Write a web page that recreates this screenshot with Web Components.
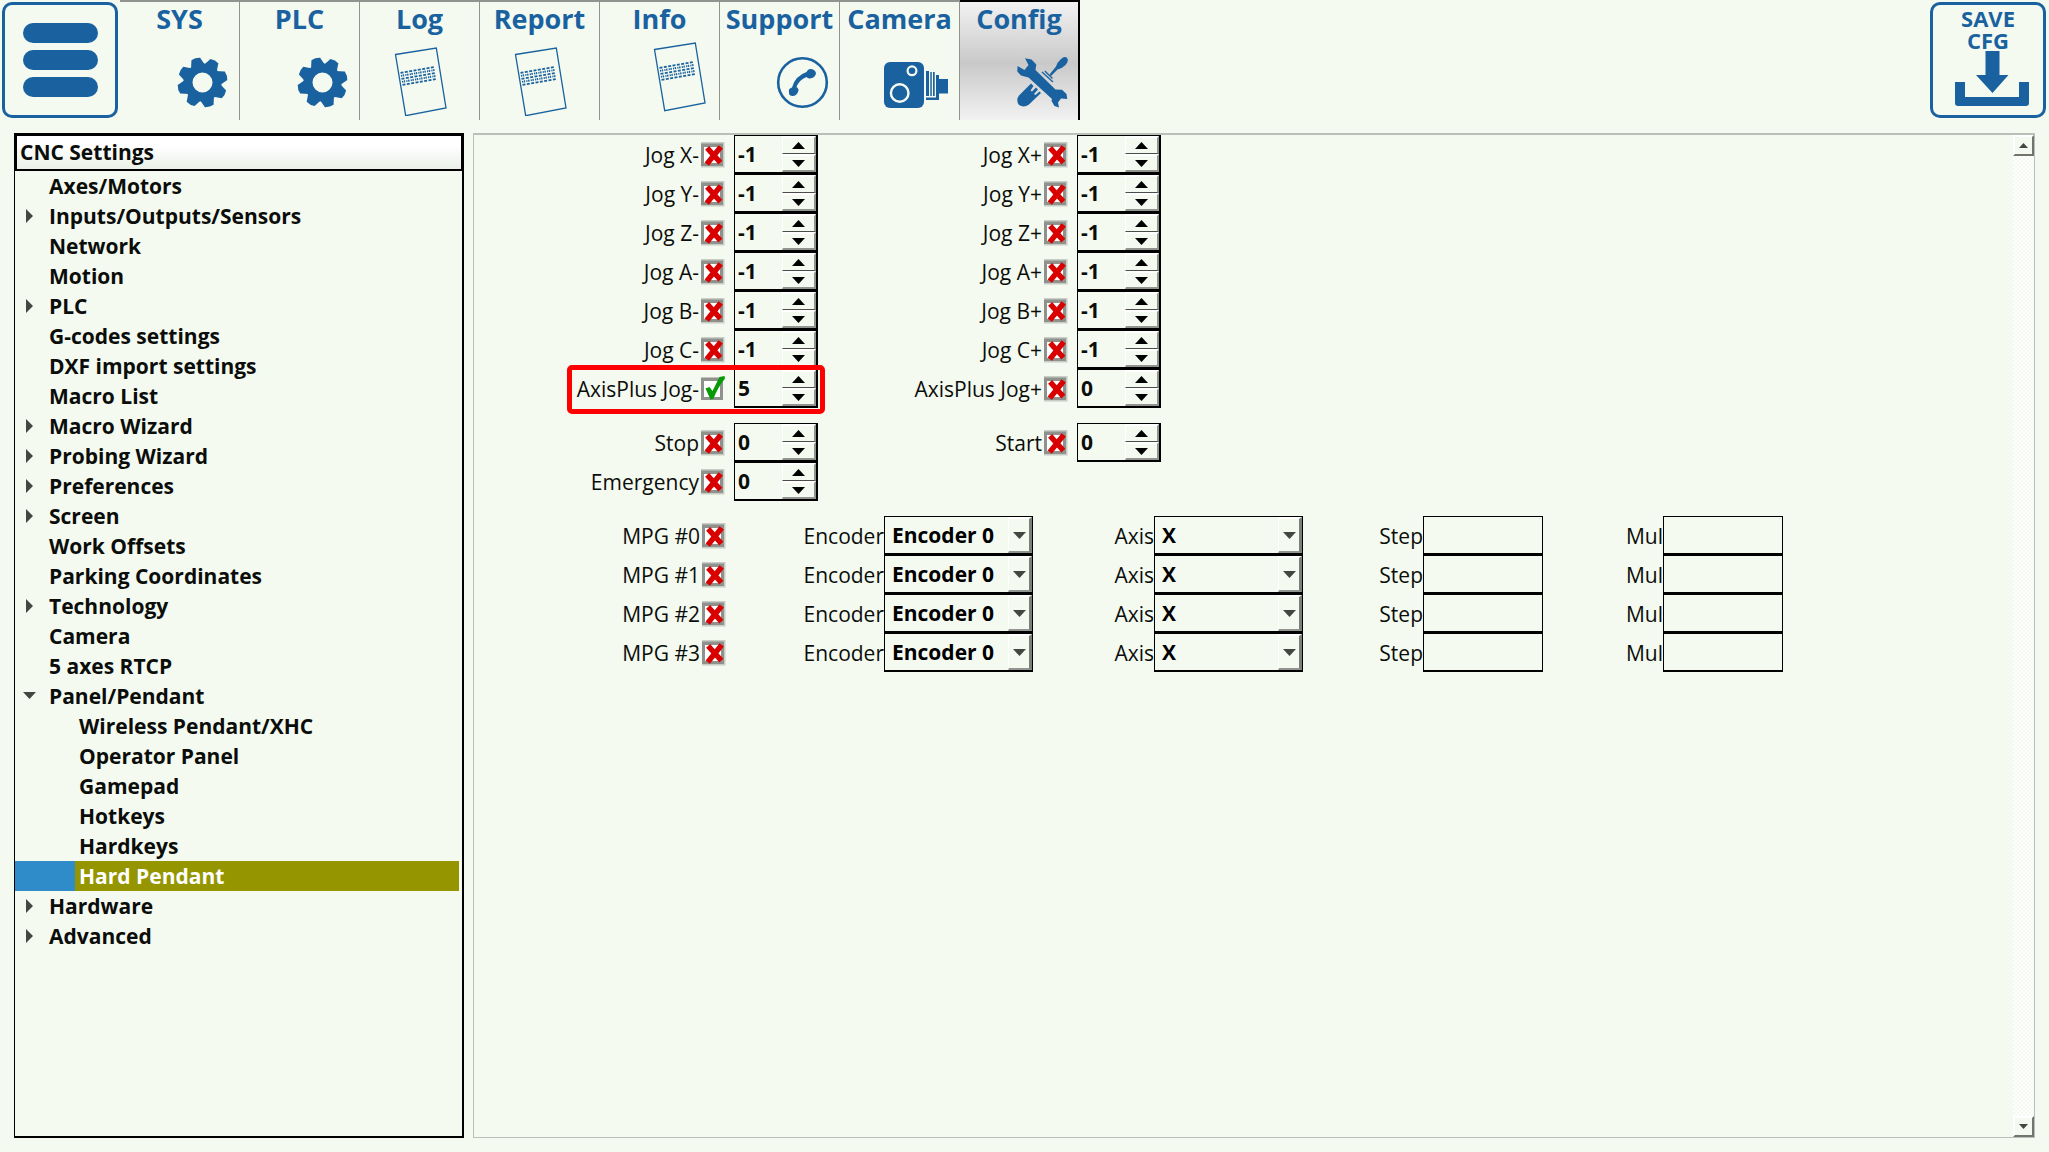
<!DOCTYPE html>
<html lang="en">
<head>
<meta charset="utf-8">
<title>CNC Settings</title>
<style>
  html, body { margin: 0; }
  body {
    --bg: #f4faf0;
    --blue: #1a629f;
    background: var(--bg);
    color: #0b0d0a;
    font: 21px/30px "Open Sans", "Noto Sans", sans-serif;
  }
</style>
</head>
<body>
<cnc-app></cnc-app>

<script>
const define = (name, html, setup) => {
  const template = document.createElement('template');
  template.innerHTML = '<style>*{box-sizing:border-box}</style>' + html;
  customElements.define(name, class extends HTMLElement {
    constructor() {
      super();
      this.attachShadow({ mode: 'open' }).append(template.content.cloneNode(true));
    }
    connectedCallback() {
      if (setup && !this.ready) { this.ready = true; setup(this, this.shadowRoot); }
    }
  });
};

/* Toolbar pictures; coordinates are those of the 119 x 120 tab. */
const gear = '<g fill="currentColor">' +
  [-16, 29, 74, 119, 164, 209, 254, 299].map(a =>
    `<path transform="rotate(${a} 82.5 82.5)" d="M75 67 L78 58 Q82.5 56.5 87 58 L90 67Z"/>`).join('') +
  '</g><circle cx="82.5" cy="82.5" r="14.5" fill="none" stroke="currentColor" stroke-width="9"/>';
const sheet = (dx, dy) => `<g transform="translate(${dx} ${dy})" fill="none" stroke="currentColor">
  <path stroke-width="1.3" d="M35.5 54.5 L76.3 48 L86 108 L45.7 115.7Z"/>
  <g stroke-width="1.8">${[0, 1, 2, 3, 4].map(i =>
    `<path stroke-dasharray="${i % 2 ? '1.2 .6 1.4 1.2' : '3 1.4'}" transform="translate(${i * 0.5} ${i * 3})" d="M40.500 72.800 L74 67"/>`).join('')}
  </g></g>`;
const icons = {
  gear,
  sheet: sheet(0, 0),
  sheetInfo: sheet(19, -5),
  phone: `<circle cx="82.5" cy="82.5" r="24.3" fill="none" stroke="currentColor" stroke-width="2.6"/>
    <path fill="currentColor" d="M69 92 Q68 88.5 72 87.5 Q75 76 86.5 72 Q88 68.5 91 69 Q95.500 69.500 96 73.500 Q95 77.500 91 78.200 Q88 79 86.500 77 Q79 80 76.500 87 Q79.500 89 78 92 Q76 96.500 72 96 Q68.500 95.500 69 92Z"/>`,
  camera: `<g fill="currentColor"><rect x="44" y="62" width="40" height="46" rx="6"/>
    <path d="M86 71h3v25h-3z M90.300 72h1.500v24h-1.500z M93 72h1.700v24h-1.700z M96 75h3v4h9v14.500h-9v6.500h-13v-2.500h10z"/></g>
    <circle cx="72" cy="70.800" r="4.400" fill="none" stroke="#f4faf0" stroke-width="2.200"/>
    <circle cx="59.700" cy="93" r="8.800" fill="none" stroke="#f4faf0" stroke-width="2.400"/>`,
  tools: `<g fill="currentColor">
    <path d="M89.500 74.500 L96 66.500 Q97 62.500 101 59 Q105 55.500 107.300 58.300 Q109 61 105.500 65 Q101.500 69 97.500 69.500 L91 76Z"/>
    <path d="M71 83.500 L73.500 86 L70.500 90.500 L72 91.500 L76 87.500 L78 89.500 L74 94 L75.500 95 L79.500 91.500 L81 93 L69 104.500 Q64 108 59 105 Q55.500 100 59 95.500Z"/>
    <path d="M57.500 66 L57.300 71.500 L61 75.500 L68.500 77.500 L92 99 L91.500 101 L94.500 106 L99 107.500 L98 102.500 L101 98.500 L107.300 99 L106.500 94 L102 89.800 L95.500 89.500 L75.500 70 L76.300 64.500 L71.500 59.600 L65 58.300 L68.500 65 L64.500 70Z"/></g>
    <path fill="none" stroke="currentColor" stroke-width="1.300" d="M82 72 L93 82 M84.800 71 L92.500 78.500"/>`
};

const triangle = { up: 'M0 7 L6.500 0 L13 7Z', down: 'M0 0 L13 0 L6.500 7Z' };

define('cnc-tab', `
  <style>
    :host { display: block; width: 120px; }
    button { display: flex; flex-direction: column; justify-content: flex-start; width: 100%; height: 120px;
      margin: 0; padding: 0; border: 0;
      border-top: 2px solid #91938e; border-right: 1px solid #91938e; background: none;
      color: var(--blue); font: bold 27px/34px "Open Sans", sans-serif; text-align: center; white-space: nowrap; }
    span { display: block; width: 100%; }
    svg { display: block; width: 119px; height: 80px; }
    :host([active]) button { border-color: #000; border-right-width: 2px;
      background: linear-gradient(#f2f2f2, #c9c9c9 52%, #f2f2f2); }
  </style>
  <button type="button"><span><slot></slot></span><svg viewBox="0 36 119 80" aria-hidden="true"></svg></button>`,
  (host, root) => { root.querySelector('svg').innerHTML = icons[host.getAttribute('icon')]; });

define('cnc-framed-button', `
  <style>
    :host { display: block; width: 116px; }
    button { display: flex; flex-direction: column; align-items: center; justify-content: flex-start;
      width: 100%; height: 116px; margin: 0; padding: 0; border: 3px solid var(--blue);
      border-radius: 10px; background: none; color: var(--blue); text-align: center;
      font: bold 22px/22px "Open Sans", sans-serif; }
    ::slotted(svg) { display: block; }
  </style>
  <button type="button"><slot></slot></button>`,
  (host, root) => {
    const label = host.getAttribute('label');
    if (label) root.querySelector('button').setAttribute('aria-label', label);
  });

define('cnc-toolbar', `
  <style>
    :host { display: flex; align-items: flex-start; justify-content: space-between; height: 120px; padding: 0 3px 0 2px; }
    nav { display: flex; gap: 2px; align-items: flex-start; }
    .tabs { display: flex; }
    cnc-framed-button { margin-top: 2px; }
    .bars { width: 110px; height: 110px; }
    .save { width: 110px; height: 60px; }
    .caption { display: block; width: 64px; padding-top: 2px; }
  </style>
  <nav>
    <cnc-framed-button label="Menu"><svg class="bars" viewBox="5 5 110 110" fill="#1a629f" aria-hidden="true">
      <rect x="23" y="23" width="75" height="20" rx="10"/>
      <rect x="23" y="50" width="75" height="20" rx="10"/>
      <rect x="23" y="77" width="75" height="20" rx="10"/></svg></cnc-framed-button>
    <div class="tabs">
      <cnc-tab icon="gear">SYS</cnc-tab>
      <cnc-tab icon="gear">PLC</cnc-tab>
      <cnc-tab icon="sheet">Log</cnc-tab>
      <cnc-tab icon="sheet">Report</cnc-tab>
      <cnc-tab icon="sheetInfo">Info</cnc-tab>
      <cnc-tab icon="phone">Support</cnc-tab>
      <cnc-tab icon="camera">Camera</cnc-tab>
      <cnc-tab icon="tools" active>Config</cnc-tab>
    </div>
  </nav>
  <cnc-framed-button><span class="caption">SAVE CFG</span><svg class="save" viewBox="3 51 110 60" fill="#1a629f" aria-hidden="true">
    <path d="M55.500 51h14v24h9L62.500 93 46 75h9.500z"/>
    <path d="M25 82h10v15h54v-15h10v21q0 3-3 3h-68q-3 0-3-3z"/></svg></cnc-framed-button>`);

define('cnc-tree-item', `
  <style>
    :host { display: block; padding-right: 3px; }
    a { display: flex; height: 30px; color: inherit; text-decoration: none; }
    .mark { display: flex; flex: none; align-items: center; width: 30px; padding-left: 8px; }
    :host([level="2"]) .mark { width: 60px; }
    .text { flex: 1; padding-left: 4px; }
    svg { display: none; width: 14px; height: 14px; fill: #444641; }
    :host([branch]) svg { display: block; }
    :host([selected]) .mark { background: #2f8cc9; }
    :host([selected]) .text { background: #959500; color: #fff; }
  </style>
  <a href="#"><span class="mark"><svg viewBox="0 0 14 14" aria-hidden="true"><path/></svg></span><span class="text"><slot></slot></span></a>`,
  (host, root) => {
    root.querySelector('path').setAttribute('d',
      host.getAttribute('branch') === 'open' ? 'M0 3 H13 L6.500 10Z' : 'M3 0 V14 L10 7Z');
  });

define('cnc-tree', `
  <style>
    :host { display: flex; flex-direction: column; flex: none; width: 450px; font-weight: bold;
      border: solid #000; border-width: 1px 2px 2px 1px; }
    h2 { margin: 0; height: 37px; padding-left: 3px; font-size: 21px; line-height: 32px;
      border: 2px solid #000; border-width: 2px 1px 2px 2px; background: linear-gradient(#fff 30%, #eaf0e8); }
  </style>
  <h2>CNC Settings</h2><nav></nav>`,
  (host, root) => {
    const items = ['Axes/Motors', '>Inputs/Outputs/Sensors', 'Network', 'Motion', '>PLC', 'G-codes settings',
      'DXF import settings', 'Macro List', '>Macro Wizard', '>Probing Wizard', '>Preferences', '>Screen',
      'Work Offsets', 'Parking Coordinates', '>Technology', 'Camera', '5 axes RTCP', 'vPanel/Pendant',
      '-Wireless Pendant/XHC', '-Operator Panel', '-Gamepad', '-Hotkeys', '-Hardkeys', '*Hard Pendant',
      '>Hardware', '>Advanced'];
    const attrs = { '>': 'branch="closed"', 'v': 'branch="open"', '-': 'level="2"', '*': 'level="2" selected' };
    root.querySelector('nav').innerHTML = items.map(t => {
      const a = attrs[t[0]];
      return `<cnc-tree-item ${a || ''}>${a ? t.slice(1) : t}</cnc-tree-item>`;
    }).join('');
  });

define('cnc-check', `
  <style>
    :host { display: block; height: 39px; }
    label { display: grid; grid-template-columns: 1fr 24px; column-gap: 2px; align-items: center;
      height: 39px; text-align: right; white-space: nowrap; }
    input { appearance: none; grid-area: 1 / 2; width: 24px; height: 26px; margin: 0; }
    svg { grid-area: 1 / 2; width: 24px; height: 26px; margin-top: 1px; pointer-events: none; }
    .yes, input:checked ~ svg .no { display: none; }
    input:checked ~ svg .yes { display: block; }
  </style>
  <label><span><slot></slot></span><input type="checkbox">
    <svg viewBox="0 0 24 26" aria-hidden="true">
      <path class="no" fill="#c8cdc5" d="M0 0h23.500v25.500h-23.500z"/>
      <path fill="#8f918d" d="M0 1.500h22v22.500h-22z"/><path fill="#fff" d="M3 5h16v16h-16z"/>
      <g class="no" fill="none" stroke="#d90000" stroke-linecap="square">
        <path stroke-width="5.500" d="M8 8 L17.500 18.500 M18 7 L7.500 20"/></g>
      <path class="yes" fill="#069a06" d="M4.500 12.500 L8.500 11 L11.500 15 L18.500 1 L23.500 0 L24 2.500 Q17 11 12.500 22.500 L9.500 23.500Z"/>
    </svg></label>`,
  (host, root) => { root.querySelector('input').checked = host.hasAttribute('checked'); });

define('cnc-spin', `
  <style>
    :host { display: grid; grid-template: 18px 18px / 1fr 36px; height: 39px; width: 84px; flex: none;
      border: solid #000; border-width: 1px 2px 2px 1px; }
    input { appearance: textfield; grid-area: 1 / 1 / 3; width: 100%; min-width: 0; margin: 0; padding: 0 0 0 3px; border: 0;
      background: none; color: inherit; font: bold 21px/36px "Open Sans", sans-serif; }
    input::-webkit-inner-spin-button { appearance: none; margin: 0; }
    button { display: grid; place-items: center; margin: 0 0 0 2px; padding: 0; background: var(--bg);
      border: solid; border-width: 2px 2px 1px 1px; border-color: #fff #92948f #4b4d49 #fff; }
    button + button { border-bottom: 2px solid #92948f; }
    svg { width: 13px; height: 7px; }
  </style>
  <input type="number">
  <button type="button" aria-label="Increase"><svg viewBox="0 0 13 7"><path d="${triangle.up}"/></svg></button>
  <button type="button" aria-label="Decrease"><svg viewBox="0 0 13 7"><path d="${triangle.down}"/></svg></button>`,
  (host, root) => {
    const input = root.querySelector('input');
    input.value = host.getAttribute('value');
    input.setAttribute('aria-label', host.getAttribute('name'));
    const [up, down] = root.querySelectorAll('button');
    up.onclick = () => input.stepUp();
    down.onclick = () => input.stepDown();
  });

/* A tick box with its caption, followed by a number. */
define('cnc-signal', `
  <style>
    :host { display: flex; position: relative; width: 343px; gap: 9px; }
    cnc-check { flex: 1; }
    :host([marked])::after { content: ""; position: absolute; inset: -4px -7px -6px 92px; z-index: 1;
      border: 5px solid #fe0000; border-radius: 5px; pointer-events: none; box-sizing: border-box; }
  </style>`,
  (host, root) => {
    const name = host.getAttribute('name');
    const check = document.createElement('cnc-check');
    check.textContent = name;
    check.toggleAttribute('checked', host.hasAttribute('checked'));
    const spin = document.createElement('cnc-spin');
    spin.setAttribute('name', name);
    spin.setAttribute('value', host.getAttribute('value'));
    root.append(check, spin);
  });

define('cnc-choice', `
  <style>
    :host { display: grid; grid-template-columns: 1fr 149px; height: 39px; align-items: center; }
    label { text-align: right; }
    .box { display: grid; grid-template-columns: 1fr 24px; height: 39px; padding-bottom: 1px;
      border: solid #000; border-width: 1px 1px 2px 1px; }
    select { appearance: none; grid-area: 1 / 1 / 2 / 3; height: 36px; margin: 0; padding: 0 24px 0 7px; border: 0; background: none;
      color: #000; font: bold 21px/36px "Open Sans", sans-serif; }
    .arrow { grid-area: 1 / 2; display: grid; place-items: center; height: 36px; border: solid;
      border-width: 2px 3px 2px 1px; border-color: #fff #7c7e79 #92948f #fff; background: var(--bg); pointer-events: none; }
    svg { width: 13px; height: 7px; fill: #444641; }
  </style>
  <label for="s"><slot></slot></label>
  <span class="box"><select id="s"></select><span class="arrow"><svg viewBox="0 0 13 7"><path d="${triangle.down}"/></svg></span></span>`,
  (host, root) => { root.querySelector('select').add(new Option(host.getAttribute('value'))); });

define('cnc-entry', `
  <style>
    :host { display: grid; grid-template-columns: 1fr 120px; height: 39px; align-items: center; }
    label { text-align: right; }
    input { width: 100%; height: 39px; margin: 0; padding: 0 4px; border: solid #000; border-width: 1px 1px 2px 1px;
      background: none; color: inherit; font: bold 21px/36px "Open Sans", sans-serif; }
  </style>
  <label for="i"><slot></slot></label><input id="i" type="text">`);

define('cnc-scrollbar', `
  <style>
    :host { display: flex; flex-direction: column; flex: none; width: 21px; }
    button { display: grid; place-items: center; height: 21px; margin: 0; padding: 0; background: var(--bg);
      border: 2px solid; border-color: #fff #72746f #72746f #fff; }
    .track { flex: 1; background: repeating-conic-gradient(#fff 0 25%, #f4faf0 0 50%) 0 0 / 4px 4px; }
    svg { width: 9px; height: 5px; fill: #444641; }
  </style>
  <button type="button" aria-label="Scroll up"><svg viewBox="0 0 13 7"><path d="${triangle.up}"/></svg></button>
  <div class="track"></div>
  <button type="button" aria-label="Scroll down"><svg viewBox="0 0 13 7"><path d="${triangle.down}"/></svg></button>`);

define('cnc-pendant-form', `
  <style>
    :host { display: flex; flex: 1; min-width: 0; border: solid #babfb7; border-width: 2px 1px 1px 1px; }
    form { display: flex; flex: 1; flex-direction: column; gap: 15px; padding-left: 1px; }
    .row { display: flex; }
    .row > cnc-check { width: 251px; }
    .encoder { width: 307px; }
    .axis { width: 270px; }
    cnc-entry { width: 240px; }
  </style>
  <form><div id="jog"></div><div id="run"></div><div id="mpg"></div></form>
  <cnc-scrollbar></cnc-scrollbar>`,
  (host, root) => {
    const signal = (name, value, extra = '') => `<cnc-signal name="${name}" value="${value}" ${extra}></cnc-signal>`;
    const row = html => `<div class="row">${html}</div>`;
    root.getElementById('jog').innerHTML =
      ['X', 'Y', 'Z', 'A', 'B', 'C'].map(a => row(signal(`Jog ${a}-`, -1) + signal(`Jog ${a}+`, -1))).join('') +
      row(signal('AxisPlus Jog-', 5, 'checked marked') + signal('AxisPlus Jog+', 0));
    root.getElementById('run').innerHTML =
      row(signal('Stop', 0) + signal('Start', 0)) + row(signal('Emergency', 0));
    root.getElementById('mpg').innerHTML = [0, 1, 2, 3].map(n => row(
      `<cnc-check>MPG #${n}</cnc-check>
       <cnc-choice class="encoder" value="Encoder 0">Encoder</cnc-choice>
       <cnc-choice class="axis" value="X">Axis</cnc-choice>
       <cnc-entry>Step</cnc-entry><cnc-entry>Mul</cnc-entry>`)).join('');
  });

define('cnc-app', `
  <style>
    :host { display: flex; flex-direction: column; gap: 13px; min-height: 100vh; box-sizing: border-box; padding-bottom: 14px; }
    main { display: flex; flex: 1; gap: 9px; padding: 0 14px; }
  </style>
  <cnc-toolbar></cnc-toolbar>
  <main><cnc-tree></cnc-tree><cnc-pendant-form></cnc-pendant-form></main>`);
</script>
</body>
</html>
